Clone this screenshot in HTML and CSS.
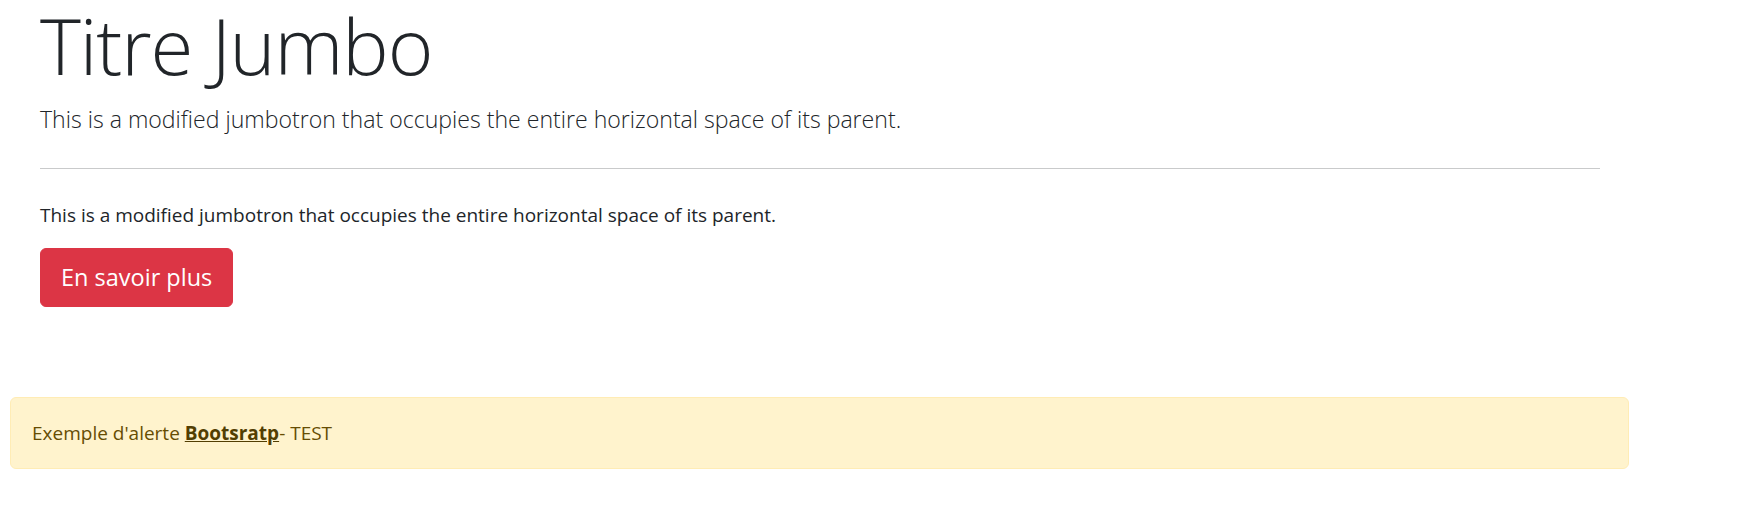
FILE: index.html
```html
<!DOCTYPE html>
<html lang="fr">
<head>
<meta charset="utf-8">
<title>Jumbotron</title>
<link rel="stylesheet" href="styles.css">
</head>
<body>
<div class="page">
  <div class="jumbo">
    <h1 class="display">Titre Jumbo</h1>
    <p class="lead">This is a modified jumbotron that occupies the entire horizontal space of its parent.</p>
    <hr class="divider">
    <p class="text">This is a modified jumbotron that occupies the entire horizontal space of its parent.</p>
    <a class="btn-danger" href="#">En savoir plus</a>
  </div>
  <div class="alert">Exemple d'alerte <a class="alert-link" href="#">Bootsratp</a>- TEST</div>
</div>
</body>
</html>
```
FILE: styles.css
```css
html, body {
  margin: 0;
  padding: 0;
  background: #fff;
}
body {
  font-family: "Open Sans", "Noto Sans", sans-serif;
  font-size: 19px;
  line-height: 30px;
  color: #212529;
}
.page {
  width: 1619px;
  padding: 3px 0 0 10px;
}
.jumbo {
  display: flex;
  flex-direction: column;
  align-items: flex-start;
  padding: 0 29px 0 30px;
}
.display {
  margin: 0;
  padding: 0 0 8px;
  font-size: 78px;
  line-height: 84px;
  font-weight: 300;
  letter-spacing: -1.1px;
}
.lead {
  margin: 6px 0 0;
  font-size: 23.1px;
  line-height: 36px;
  font-weight: 300;
}
.divider {
  align-self: stretch;
  margin: 31px 0 0;
  border: 0;
  border-top: 1px solid #c9cacb;
  height: 0;
}
.text {
  margin: 31px 0 0;
}
.btn-danger {
  margin-top: 18px;
  display: inline-block;
  padding: 10px 20px;
  font-size: 23.5px;
  line-height: 37px;
  color: #fff;
  background: #dc3545;
  border: 1px solid #dc3545;
  border-radius: 6px;
  text-decoration: none;
}
.alert {
  margin-top: 90px;
  padding: 20px 21px;
  border: 1px solid #ffecb5;
  border-radius: 6px;
  background: #fff3cd;
  color: #664d03;
}
.alert-link {
  color: #523e02;
  font-weight: 700;
  text-decoration: underline;
}
```
